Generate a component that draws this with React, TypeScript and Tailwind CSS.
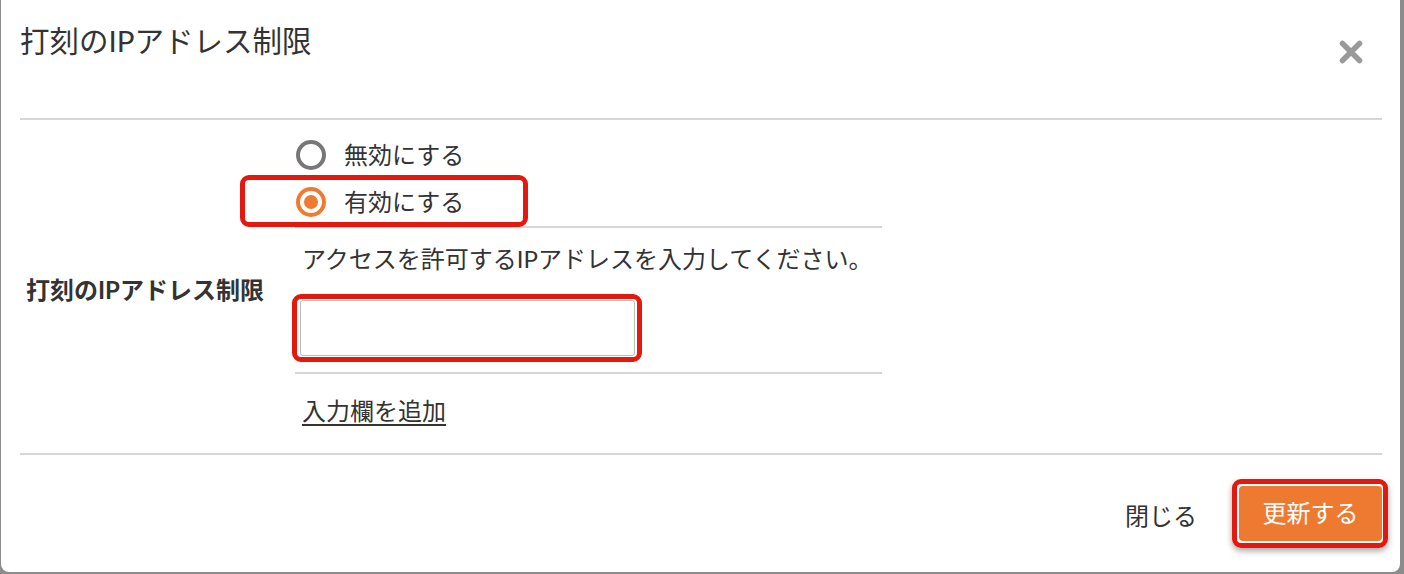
import React from "react";

const font = { fontFamily: '"Lato", "Noto Sans CJK JP", sans-serif' };

export default function App() {
  return (
    <div className="w-[1404px] h-[574px] bg-[#8c8c8c] overflow-hidden" style={font}>
      <div className="ml-[1px] w-[1399px] h-[572px] bg-white rounded-b-[8px] text-[#333]">
        {/* header */}
        <div className="h-[118px] pl-[19px] pr-[17px] flex items-start justify-between">
          <h1 className="pt-[21px] text-[29.5px] leading-[40px] font-normal text-[#333]">打刻のIPアドレス制限</h1>
          <button className="mt-[40px] mr-[20px] w-[24px] h-[24px]" aria-label="close">
            <svg width="24" height="24" viewBox="0 0 24 24">
              <path d="M3.5 3.5 L20.5 20.5 M20.5 3.5 L3.5 20.5" stroke="#999" strokeWidth="5.5" strokeLinecap="round" />
            </svg>
          </button>
        </div>
        <div className="ml-[19px] w-[1362px]">
          {/* body */}
          <div className="flex items-center border-t-2 border-b-2 border-[#d6d6d6]">
            <div className="w-[275px] pl-[6px] text-[24px] font-bold leading-[30px] pt-[6px]">打刻のIPアドレス制限</div>
            <div className="w-[587px] text-[24px]">
              <div className="pt-[11px] pb-[1px] border-b-2 border-[#d6d6d6]">
                <label className="h-[47px] flex items-center">
                  <span className="ml-[1px] w-[30px] h-[30px] rounded-full border-[4px] border-[#777] bg-white" />
                  <span className="ml-[18px] leading-[30px]">無効にする</span>
                </label>
                <div className="relative">
                  <label className="h-[47px] flex items-center">
                    <span className="ml-[1px] w-[30px] h-[30px] rounded-full border-[4px] border-[#ef7b32] bg-white flex items-center justify-center">
                      <span className="w-[14px] h-[14px] rounded-full bg-[#ef7b32]" />
                    </span>
                    <span className="ml-[18px] leading-[30px]">有効にする</span>
                  </label>
                  <div className="absolute left-[-55px] top-[-3px] w-[288px] h-[52px] border-[5px] border-[#e3180e] rounded-[9px] pointer-events-none" />
                </div>
              </div>
              <div className="pt-[17px] pb-[16px] border-b-2 border-[#d6d6d6]">
                <p className="pl-[7px] leading-[28px]">アクセスを許可するIPアドレスを入力してください。</p>
                <div className="relative ml-[5px] mt-[27px] w-[335px] h-[56px]">
                  <input className="w-full h-full border border-[#bbb] rounded-[3px] outline-none" />
                  <div className="absolute left-[-8px] top-[-6px] w-[350px] h-[68px] border-[5px] border-[#e3180e] rounded-[9px] pointer-events-none" />
                </div>
              </div>
              <div className="pt-[19px] pb-[24px] pl-[7px]">
                <a className="underline decoration-[2px] underline-offset-[4px] leading-[28px] text-[#333]" href="#">入力欄を追加</a>
              </div>
            </div>
          </div>
          {/* footer */}
          <div className="h-[116px] flex items-center justify-end">
            <button className="text-[24px] leading-[30px] text-[#333] mr-[42px] mt-[6px]">閉じる</button>
            <div className="relative">
              <button className="w-[143px] h-[55px] bg-[#ee7a32] text-white text-[24px] rounded-[4px]">更新する</button>
              <div className="absolute left-[-7px] top-[-7px] w-[156px] h-[69px] border-[5px] border-[#e3180e] rounded-[9px] shadow-[0_3px_6px_rgba(0,0,0,0.35)] pointer-events-none" />
            </div>
          </div>
        </div>
      </div>
    </div>
  );
}
